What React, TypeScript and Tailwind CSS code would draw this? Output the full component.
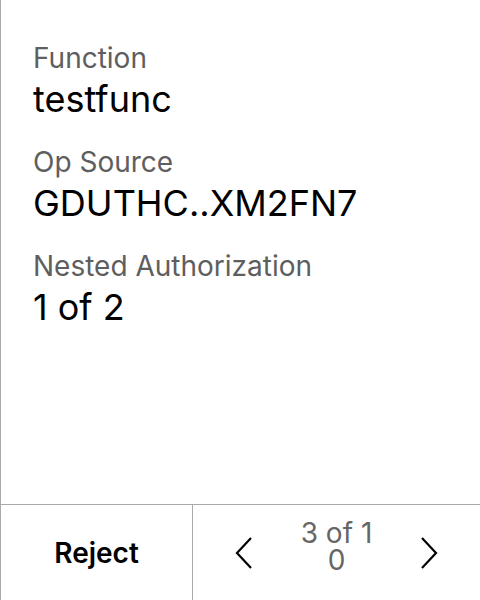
import React from "react";

function Field({ label, value }: { label: string; value: string }) {
  return (
    <div className="flex flex-col">
      <div className="text-[28px] leading-[34px] text-[#5e5e5e]">{label}</div>
      <div className="text-[36px] leading-[48px] text-black">{value}</div>
    </div>
  );
}

export default function App() {
  return (
    <div
      className="w-[480px] h-[600px] flex flex-col bg-white border-l border-[#a9a9a9]"
      style={{ fontFamily: "Inter, 'Noto Sans', sans-serif" }}
    >
      <div className="flex-1 flex flex-col gap-[22px] pl-[32px] pt-[41px]">
        <Field label="Function" value="testfunc" />
        <Field label="Op Source" value="GDUTHC..XM2FN7" />
        <Field label="Nested Authorization" value="1 of 2" />
      </div>
      <div className="h-[96px] flex border-t border-[#a9a9a9]">
        <div className="w-[192px] flex items-center justify-center border-r border-[#a9a9a9]">
          <span className="text-[28px] leading-[34px] font-semibold text-black">Reject</span>
        </div>
        <div className="flex-1 flex items-center justify-between px-[42px]">
          <svg width="18" height="32" viewBox="0 0 18 32" fill="none">
            <path d="M16 1 L2 16 L16 31" stroke="black" strokeWidth="2.2" />
          </svg>
          <div className="w-[80px] mb-[12px] text-center break-all text-[28px] leading-[27px] text-[#666666]">3 of 10</div>
          <svg width="18" height="32" viewBox="0 0 18 32" fill="none">
            <path d="M2 1 L16 16 L2 31" stroke="black" strokeWidth="2.2" />
          </svg>
        </div>
      </div>
    </div>
  );
}
